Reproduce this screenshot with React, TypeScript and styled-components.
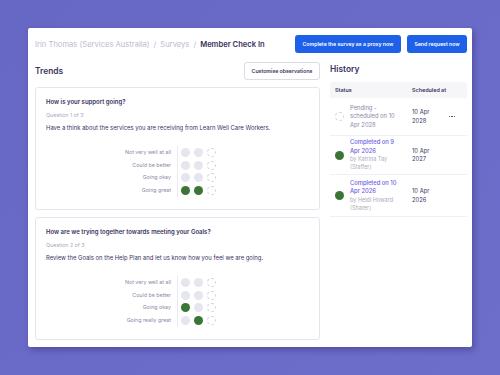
import React from 'react';
import styled, { createGlobalStyle } from 'styled-components';

const GlobalStyle = createGlobalStyle`
  html, body {
    margin: 0;
    padding: 0;
    background: #6b6bc8;
    font-family: Inter, "Noto Sans", sans-serif;
    -webkit-font-smoothing: antialiased;
  }
`;

const Page = styled.div`
  width: 500px;
  height: 375px;
  padding: 28px;
  box-sizing: border-box;
  background: linear-gradient(135deg, #6767c6 0%, #6d6dca 100%);
`;

const Window = styled.div`
  width: 444px;
  height: 319px;
  background: #fff;
  border-radius: 2px;
  box-shadow: 2px 3px 6px rgba(30, 30, 90, 0.35);
  overflow: hidden;
  padding: 7px 5px 0 7px;
  box-sizing: border-box;
`;

const Header = styled.div`
  display: flex;
  align-items: center;
  justify-content: space-between;
  height: 18px;
`;

const Breadcrumb = styled.div`
  display: flex;
  align-items: center;
  gap: 4px;
  font-size: 7.6px;
  color: #bdbbcd;
  white-space: nowrap;
`;

const Crumb = styled.span<{ current?: boolean }>`
  color: ${({ current }) => (current ? '#37345f' : '#bdbbcd')};
  font-weight: ${({ current }) => (current ? 600 : 400)};
`;

const Actions = styled.div`
  display: flex;
  gap: 6px;
`;

const PrimaryButton = styled.button<{ w: number }>`
  width: ${({ w }) => w}px;
  height: 18px;
  border: none;
  border-radius: 3px;
  background: #1e60e8;
  color: #fff;
  font-family: inherit;
  font-size: 5.2px;
  font-weight: 600;
  padding: 0;
`;

const Body = styled.div`
  display: grid;
  grid-template-columns: 285px 137px;
  gap: 10px;
  margin-top: 9px;
`;

const Column = styled.div`
  display: flex;
  flex-direction: column;
`;

const SectionHead = styled.div<{ h: number; mb: number }>`
  display: flex;
  align-items: center;
  justify-content: space-between;
  height: ${({ h }) => h}px;
  margin-bottom: ${({ mb }) => mb}px;
`;

const SectionTitle = styled.h2`
  margin: 0;
  font-size: 8.4px;
  font-weight: 600;
  color: #37345f;
`;

const OutlineButton = styled.button`
  height: 18px;
  width: 76px;
  padding: 0;
  border: 1px solid #dcdbe6;
  border-radius: 3px;
  background: #fff;
  color: #37345f;
  font-family: inherit;
  font-size: 5.2px;
  font-weight: 600;
`;

const Card = styled.div`
  border: 1px solid #e6e5ee;
  border-radius: 3px;
  padding: 9px 10px 11px;
  margin-bottom: 7px;
  height: 123px;
  box-sizing: border-box;
`;

const CardTitle = styled.div`
  font-size: 6px;
  font-weight: 600;
  color: #37345f;
  line-height: 10px;
`;

const QuestionNo = styled.div`
  font-size: 5.3px;
  color: #a9a7bc;
  line-height: 9px;
  margin-top: 4px;
`;

const CardText = styled.div`
  font-size: 5.9px;
  color: #37345f;
  line-height: 10px;
  margin-top: 3px;
`;

const Rating = styled.div`
  display: flex;
  margin-top: 13px;
`;

const Labels = styled.div`
  width: 132px;
  padding-right: 6px;
  box-sizing: border-box;
  border-right: 1px solid #ebeaf1;
`;

const Label = styled.div`
  height: 12.7px;
  line-height: 12.7px;
  text-align: right;
  font-size: 5.3px;
  color: #8c89a8;
  white-space: nowrap;
`;

const Dots = styled.div`
  padding-left: 3px;
`;

const DotRow = styled.div`
  display: flex;
  align-items: center;
  gap: 4px;
  height: 12.7px;
`;

const Dot = styled.span<{ kind: 'filled' | 'empty' | 'open' }>`
  width: 9px;
  height: 9px;
  border-radius: 50%;
  box-sizing: border-box;
  background: ${({ kind }) =>
    kind === 'filled' ? '#3b7636' : kind === 'empty' ? '#e6e6ee' : '#fff'};
  border: ${({ kind }) => (kind === 'open' ? '0.6px dashed #d2d1dc' : 'none')};
`;

const Table = styled.div`
  display: flex;
  flex-direction: column;
`;

const Row = styled.div<{ head?: boolean; h: number }>`
  display: grid;
  grid-template-columns: 9px 56px 28px 1fr;
  column-gap: 6px;
  align-items: center;
  height: ${({ h }) => h}px;
  padding-left: 5px;
  background: ${({ head }) => (head ? '#f6f6f9' : '#fff')};
  border-radius: ${({ head }) => (head ? '3px 3px 0 0' : '0')};
  border-bottom: ${({ head }) => (head ? 'none' : '1px solid #efeff4')};
  box-sizing: border-box;
`;

const HeadCell = styled.div<{ span?: number }>`
  grid-column: span ${({ span }) => span || 1};
  font-size: 5.4px;
  font-weight: 600;
  color: #37345f;
  white-space: nowrap;
`;

const StatusIcon = styled.span<{ done?: boolean }>`
  width: 9px;
  height: 9px;
  border-radius: 50%;
  box-sizing: border-box;
  background: ${({ done }) => (done ? '#3b7636' : '#fff')};
  border: ${({ done }) => (done ? 'none' : '0.6px dashed #d2d1dc')};
`;

const StatusText = styled.div`
  font-size: 5.8px;
  line-height: 8.3px;
  padding-right: 4px;
`;

const StatusMain = styled.div<{ done?: boolean }>`
  color: ${({ done }) => (done ? '#6a5ee6' : '#8c89a8')};
  font-weight: ${({ done }) => (done ? 500 : 400)};
`;

const StatusBy = styled.div`
  color: #aeacc0;
  font-size: 5.5px;
`;

const DateCell = styled.div`
  font-size: 5.8px;
  line-height: 8.3px;
  color: #37345f;
`;

const More = styled.div`
  display: flex;
  gap: 1px;
  padding-left: 3px;
`;

const MoreDot = styled.span`
  width: 1.3px;
  height: 1.3px;
  border-radius: 50%;
  background: #37345f;
`;

type Q = {
  title: string;
  no: string;
  text: string;
  rows: { label: string; dots: ('filled' | 'empty' | 'open')[] }[];
};

const questions: Q[] = [
  {
    title: 'How is your support going?',
    no: 'Question 1 of 3',
    text: 'Have a think about the services you are receiving from Learn Well Care Workers.',
    rows: [
      { label: 'Not very well at all', dots: ['empty', 'empty', 'open'] },
      { label: 'Could be better', dots: ['empty', 'empty', 'open'] },
      { label: 'Going okay', dots: ['empty', 'empty', 'open'] },
      { label: 'Going great', dots: ['filled', 'filled', 'open'] },
    ],
  },
  {
    title: 'How are we trying together towards meeting your Goals?',
    no: 'Question 2 of 3',
    text: 'Review the Goals on the Help Plan and let us know how you feel we are going.',
    rows: [
      { label: 'Not very well at all', dots: ['empty', 'empty', 'open'] },
      { label: 'Could be better', dots: ['empty', 'empty', 'open'] },
      { label: 'Going okay', dots: ['filled', 'empty', 'open'] },
      { label: 'Going really great', dots: ['empty', 'filled', 'open'] },
    ],
  },
];

const history = [
  { done: false, main: 'Pending - scheduled on 10 Apr 2028', by: '', date: '10 Apr 2028', h: 38 },
  { done: true, main: 'Completed on 9 Apr 2026', by: 'by Katrina Tay (Staffer)', date: '10 Apr 2027', h: 39 },
  { done: true, main: 'Completed on 10 Apr 2026', by: 'by Heidi Howard (Sharer)', date: '10 Apr 2026', h: 42 },
];

const App: React.FC = () => {
  return (
    <Page>
      <GlobalStyle />
      <Window>
        <Header>
          <Breadcrumb>
            <Crumb>Irin Thomas (Services Australia)</Crumb>
            <Crumb>/</Crumb>
            <Crumb>Surveys</Crumb>
            <Crumb>/</Crumb>
            <Crumb current>Member Check In</Crumb>
          </Breadcrumb>
          <Actions>
            <PrimaryButton w={106}>Complete the survey as a proxy now</PrimaryButton>
            <PrimaryButton w={60}>Send request now</PrimaryButton>
          </Actions>
        </Header>

        <Body>
          <Column>
            <SectionHead h={18} mb={7}>
              <SectionTitle>Trends</SectionTitle>
              <OutlineButton>Customise observations</OutlineButton>
            </SectionHead>
            {questions.map((q) => (
              <Card key={q.no}>
                <CardTitle>{q.title}</CardTitle>
                <QuestionNo>{q.no}</QuestionNo>
                <CardText>{q.text}</CardText>
                <Rating>
                  <Labels>
                    {q.rows.map((r) => (
                      <Label key={r.label}>{r.label}</Label>
                    ))}
                  </Labels>
                  <Dots>
                    {q.rows.map((r) => (
                      <DotRow key={r.label}>
                        {r.dots.map((d, i) => (
                          <Dot key={i} kind={d} />
                        ))}
                      </DotRow>
                    ))}
                  </Dots>
                </Rating>
              </Card>
            ))}
          </Column>

          <Column>
            <SectionHead h={13} mb={7}>
              <SectionTitle>History</SectionTitle>
            </SectionHead>
            <Table>
              <Row head h={16}>
                <HeadCell span={2}>Status</HeadCell>
                <HeadCell>Scheduled at</HeadCell>
                <span />
              </Row>
              {history.map((h) => (
                <Row key={h.date} h={h.h}>
                  <StatusIcon done={h.done} />
                  <StatusText>
                    <StatusMain done={h.done}>{h.main}</StatusMain>
                    {h.by && <StatusBy>{h.by}</StatusBy>}
                  </StatusText>
                  <DateCell>{h.date}</DateCell>
                  {h.done ? (
                    <span />
                  ) : (
                    <More>
                      <MoreDot />
                      <MoreDot />
                      <MoreDot />
                    </More>
                  )}
                </Row>
              ))}
            </Table>
          </Column>
        </Body>
      </Window>
    </Page>
  );
};

export default App;
